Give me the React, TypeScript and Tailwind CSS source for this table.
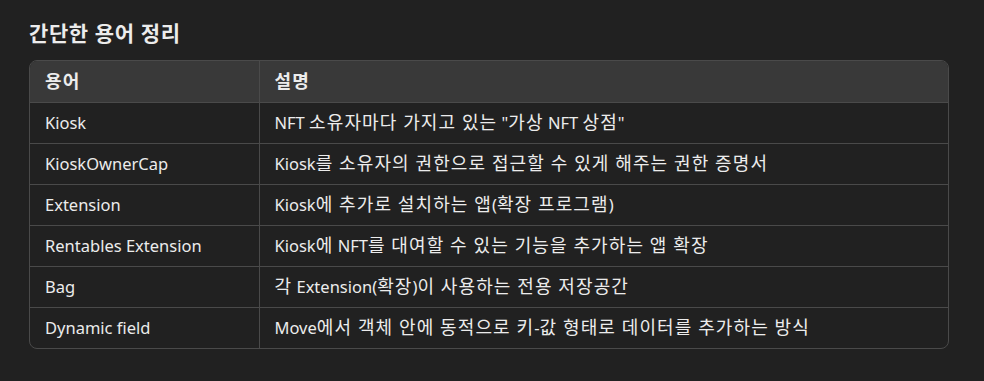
const rows: [string, string][] = [
  ['Kiosk', 'NFT 소유자마다 가지고 있는 "가상 NFT 상점"'],
  ['KioskOwnerCap', 'Kiosk를 소유자의 권한으로 접근할 수 있게 해주는 권한 증명서'],
  ['Extension', 'Kiosk에 추가로 설치하는 앱(확장 프로그램)'],
  ['Rentables Extension', 'Kiosk에 NFT를 대여할 수 있는 기능을 추가하는 앱 확장'],
  ['Bag', '각 Extension(확장)이 사용하는 전용 저장공간'],
  ['Dynamic field', 'Move에서 객체 안에 동적으로 키-값 형태로 데이터를 추가하는 방식'],
];

// Hangul runs are set a touch larger than the Latin text, as in the source font
function Ko({ text, hangul = 'text-[18px] tracking-[1.1px]' }: { text: string; hangul?: string }) {
  const parts = text.split(/([\u3131-\uD79D]+(?: [\u3131-\uD79D]+)*)/);
  return (
    <>
      {parts.map((p, i) =>
        i % 2 === 1 ? (
          <span key={i} className={hangul}>
            {p}
          </span>
        ) : (
          p
        )
      )}
    </>
  );
}

export default function App() {
  return (
    <div
      className="h-[381px] w-[984px] bg-[#212121] px-[29px] pt-[19px] text-[#ececec]"
      style={{ fontFamily: '"Noto Sans", "Noto Sans CJK KR", sans-serif' }}
    >
      <h3 className="text-[21px] font-bold leading-[28px]">
        <Ko text="간단한 용어 정리" hangul="tracking-[0.6px]" />
      </h3>
      <div className="mt-[13px] w-[920px] overflow-hidden rounded-lg border border-[#4a4a4a]">
        <table className="w-full border-collapse text-[16.5px] leading-[24px]">
          <thead>
            <tr className="h-[41px] bg-[#393939] text-left">
              <th className="w-[229px] border-b border-[#4a4a4a] px-[15px] font-bold">
                <Ko text="용어" />
              </th>
              <th className="border-b border-l border-[#4a4a4a] px-[15px] font-bold">
                <Ko text="설명" />
              </th>
            </tr>
          </thead>
          <tbody>
            {rows.map(([term, desc], i) => (
              <tr key={term} className="h-[41px]">
                <td
                  className={`px-[15px] ${i < rows.length - 1 ? 'border-b border-[#4a4a4a]' : ''}`}
                >
                  {term}
                </td>
                <td
                  className={`border-l border-[#4a4a4a] px-[15px] ${i < rows.length - 1 ? 'border-b' : ''}`}
                >
                  <Ko text={desc} />
                </td>
              </tr>
            ))}
          </tbody>
        </table>
      </div>
    </div>
  );
}
